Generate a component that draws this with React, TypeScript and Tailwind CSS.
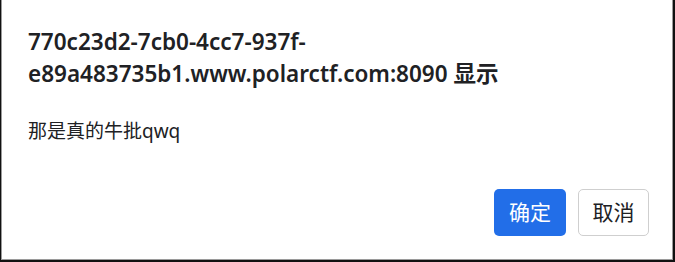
export default function App() {
  return (
    <div className="h-[262px] w-[675px] border-b border-l border-r-2 border-b-2 border-[#111] bg-white">
      <div
        className="flex h-full flex-col border-b border-l border-r border-[#9a9a9a] pl-[26px] pr-[23px] pt-[26px] text-[#202124]"
        style={{ fontFamily: '"Noto Sans", "Noto Sans CJK SC", sans-serif' }}>
        {/* title */}
        <h1 className="w-[560px] text-[22.5px] font-semibold leading-[32px]">
          770c23d2-7cb0-4cc7-937f-e89a483735b1.www.polarctf.com:8090 显示
        </h1>
        {/* message */}
        <p className="mt-[27px] text-[19px] leading-[28px]">那是真的牛批qwq</p>
        {/* actions */}
        <div className="mt-auto mb-[23px] flex justify-end gap-3">
          <button className="h-[47px] w-[72px] rounded-[5px] bg-[#226ee8] text-[21px] text-white">确定</button>
          <button className="h-[47px] w-[71px] rounded-[5px] border border-[#cfcfcf] bg-white text-[21px] text-[#202124]">取消</button>
        </div>
      </div>
    </div>
  );
}
